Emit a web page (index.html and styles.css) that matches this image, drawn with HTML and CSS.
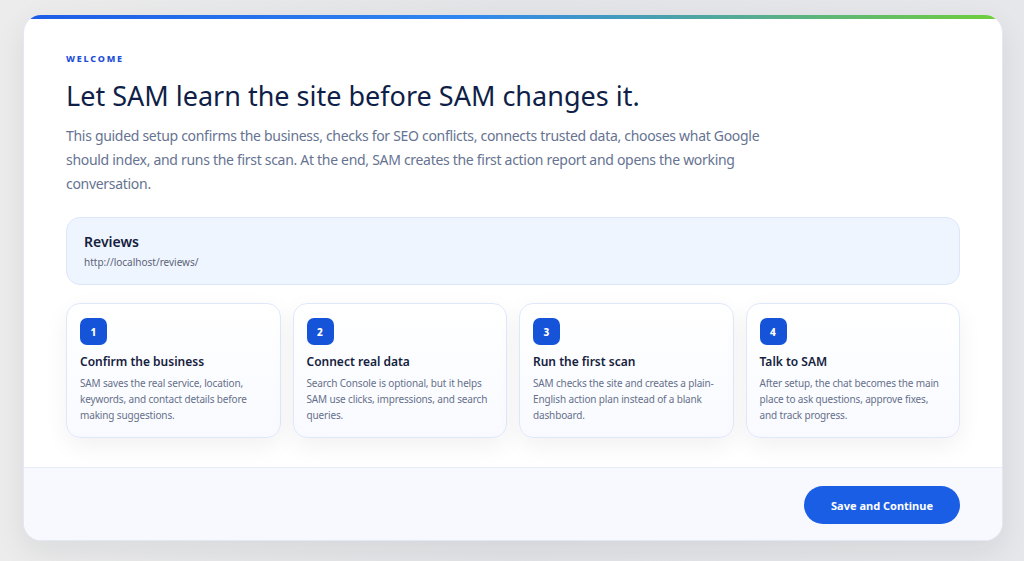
FILE: index.html
```html
<!DOCTYPE html>
<html lang="en">
<head>
    <meta charset="UTF-8">
    <meta name="viewport" content="width=device-width, initial-scale=1.0">
    <title>SAM | Setup</title>
    <link rel="stylesheet" href="styles.css">
</head>
<body>
    <div class="setup-card">
        <div class="top-bar"></div>
        <div class="setup-body">
            <p class="eyebrow">WELCOME</p>
            <h1>Let SAM learn the site before SAM changes it.</h1>
            <p class="intro">This guided setup confirms the business, checks for SEO conflicts, connects trusted data, chooses what Google should index, and runs the first scan. At the end, SAM creates the first action report and opens the working conversation.</p>

            <div class="site-box">
                <h3>Reviews</h3>
                <p>http://localhost/reviews/</p>
            </div>

            <div class="steps">
                <div class="step">
                    <span class="step-num">1</span>
                    <h4>Confirm the business</h4>
                    <p>SAM saves the real service, location, keywords, and contact details before making suggestions.</p>
                </div>
                <div class="step">
                    <span class="step-num">2</span>
                    <h4>Connect real data</h4>
                    <p>Search Console is optional, but it helps SAM use clicks, impressions, and search queries.</p>
                </div>
                <div class="step">
                    <span class="step-num">3</span>
                    <h4>Run the first scan</h4>
                    <p>SAM checks the site and creates a plain-English action plan instead of a blank dashboard.</p>
                </div>
                <div class="step">
                    <span class="step-num">4</span>
                    <h4>Talk to SAM</h4>
                    <p>After setup, the chat becomes the main place to ask questions, approve fixes, and track progress.</p>
                </div>
            </div>
        </div>
        <div class="setup-footer">
            <button class="save-button">Save and Continue</button>
        </div>
    </div>
</body>
</html>
```

FILE: styles.css
```css
body {
    font-family: "Noto Sans", "Open Sans", sans-serif;
    background: linear-gradient(90deg, #ececec 0%, #e3e4e7 50%, #e6e7ea 100%);
    margin: 0;
    padding: 15px 21px 20px 23px;
    height: 561px;
    box-sizing: border-box;
}

.setup-card {
    background: #fff;
    border-radius: 18px;
    overflow: hidden;
    box-shadow: 0 10px 30px rgba(15, 23, 42, 0.08);
    border: 1px solid #e3e8f5;
    border-top: none;
}

.top-bar {
    height: 4px;
    background: linear-gradient(90deg, #1d5ce6 0%, #2f86f0 45%, #56ad8f 75%, #6fcf3a 100%);
}

.setup-body {
    padding: 33px 42px 29px 42px;
}

.eyebrow {
    margin: 0;
    font-size: 9px;
    font-weight: 800;
    letter-spacing: 1.8px;
    color: #1d4ed8;
}

h1 {
    margin: 13px 0 0 0;
    font-size: 27px;
    font-weight: 400;
    color: #0f1f47;
    line-height: 36px;
}

.intro {
    margin: 10px 0 0 0;
    max-width: 720px;
    font-size: 14px;
    letter-spacing: -0.3px;
    line-height: 24px;
    color: #667391;
}

.site-box {
    margin-top: 21px;
    background: #eff5ff;
    border: 1px solid #dce6fa;
    border-radius: 14px;
    padding: 14px 17px 15px;
}

.site-box h3 {
    margin: 0;
    font-size: 14px;
    font-weight: 600;
    color: #14213d;
}

.site-box p {
    margin: 4px 0 0 0;
    font-size: 10px;
    color: #5b6478;
}

.steps {
    display: grid;
    grid-template-columns: repeat(4, 1fr);
    gap: 12px;
    margin-top: 18px;
}

.step {
    background: linear-gradient(180deg, #ffffff 0%, #f8faff 100%);
    border: 1px solid #dfe7fb;
    border-radius: 14px;
    padding: 14px 12px 14px 13px;
    box-shadow: 0 8px 24px rgba(15, 23, 42, 0.06);
}

.step-num {
    display: flex;
    align-items: center;
    justify-content: center;
    width: 27px;
    height: 27px;
    border-radius: 7px;
    background: #1553d8;
    color: #fff;
    font-size: 10px;
    font-weight: 800;
}

.step h4 {
    margin: 8px 0 0 0;
    font-size: 12px;
    font-weight: 600;
    color: #14213d;
}

.step p {
    margin: 5px 0 0 0;
    font-size: 10px;
    letter-spacing: -0.15px;
    line-height: 16px;
    color: #66708a;
}

.setup-footer {
    background: #f8f9fe;
    border-top: 1px solid #e8ecf6;
    padding: 18px 42px 16px;
    display: flex;
    justify-content: flex-end;
}

.save-button {
    font-family: inherit;
    font-size: 11px;
    font-weight: 700;
    color: #fff;
    background: #1b5ee6;
    border: none;
    border-radius: 20px;
    width: 156px;
    height: 38px;
    cursor: pointer;
}
```
